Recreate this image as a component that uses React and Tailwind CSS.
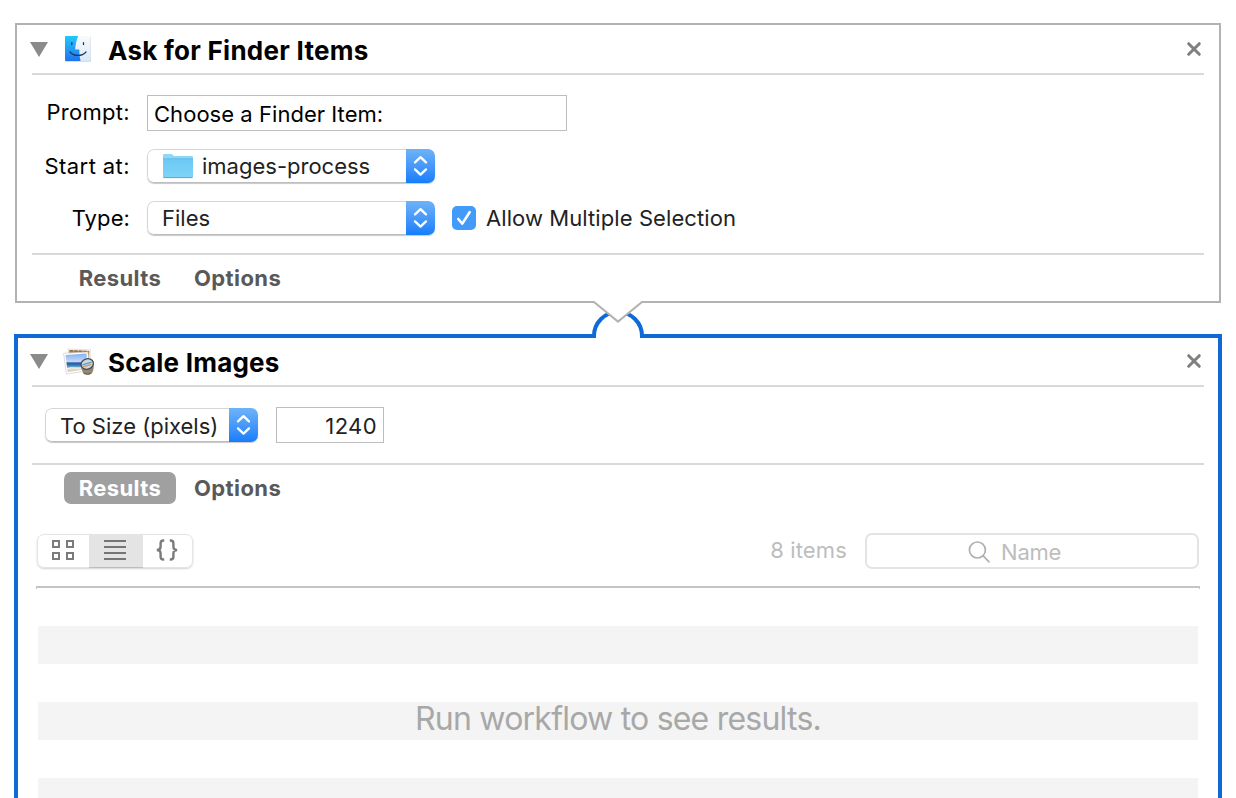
import React from "react";

function Chevrons() {
  return (
    <span className="flex h-full w-[29px] shrink-0 items-center justify-center bg-gradient-to-b from-[#6db3f8] to-[#157dfb]">
      <svg width="15" height="22" viewBox="0 0 15 22" fill="none" stroke="#fff" strokeWidth="2.3" strokeLinecap="round" strokeLinejoin="round">
        <path d="M2 7.4 7.5 2.2 13 7.4M2 14.4 7.5 19.6 13 14.4" />
      </svg>
    </span>
  );
}

function Select({ className, children }) {
  return (
    <div className={`relative flex h-[34px] overflow-hidden rounded-[7px] bg-white shadow-[0_1px_1px_rgba(0,0,0,0.22)] ${className}`}>
      <div className="flex flex-1 items-center rounded-l-[7px] border border-r-0 border-[#d6d6d6] border-b-[#bdbdbd] pl-[14px] text-[#222]">{children}</div>
      <Chevrons />
    </div>
  );
}

function FinderIcon() {
  return (
    <svg width="28" height="28" viewBox="0 0 28 28" className="block">
      <defs>
        <linearGradient id="fl" x1="0" y1="0" x2="0" y2="1">
          <stop offset="0" stopColor="#20c9fb" />
          <stop offset="1" stopColor="#2272f0" />
        </linearGradient>
        <linearGradient id="fr" x1="0" y1="0" x2="0" y2="1">
          <stop offset="0" stopColor="#fafafc" />
          <stop offset="1" stopColor="#d9e9f8" />
        </linearGradient>
      </defs>
      <rect x="1" y="1.4" width="26" height="25.4" rx="1" fill="#c9d3dd" />
      <rect x="1" y="1" width="25.6" height="25" rx="1" fill="url(#fr)" />
      <path d="M2 1H14.2C12.4 5 11.4 10 11.2 14.6H15.4C15.2 18.6 15.7 22.5 16.6 26H2A1 1 0 0 1 1 25V2A1 1 0 0 1 2 1Z" fill="url(#fl)" />
      <path d="M7.8 7.6V9.6M19.5 7.6V9.6" stroke="#16395f" strokeWidth="1.3" strokeLinecap="round" />
      <path d="M6 17C10 21.6 18 21.6 22 17" stroke="#16395f" strokeWidth="1.2" fill="none" strokeLinecap="round" />
    </svg>
  );
}

function PreviewIcon() {
  return (
    <svg width="32" height="28" viewBox="0 0 32 28" className="-ml-px block">
      <defs>
        <linearGradient id="sky" x1="0" y1="0" x2="0" y2="1">
          <stop offset="0" stopColor="#86b1f2" />
          <stop offset="0.46" stopColor="#c4dcf8" />
          <stop offset="0.5" stopColor="#2d529c" />
          <stop offset="0.64" stopColor="#3a78bc" />
          <stop offset="0.74" stopColor="#6fb4cf" />
          <stop offset="0.82" stopColor="#e9e1d0" />
          <stop offset="1" stopColor="#d1c4ab" />
        </linearGradient>
      </defs>
      <path d="M5 1 27.5 1.8 27 18 5 16Z" fill="#f3f0ea" stroke="#cfcfcf" strokeWidth=".5" />
      <path d="M6 2.2 26.2 3 26 16 7 15Z" fill="#b68a51" />
      <path d="M7 2.8 25.4 3.4" stroke="#7d5d34" strokeWidth="1" strokeDasharray="3 1.5" />
      <path d="M0.6 5.3 24.8 3.9 27 22.5 3.4 26Z" fill="#fff" stroke="#c5c5c5" strokeWidth=".6" />
      <path d="M2.4 6.9 23.4 5.6 25.2 21 4.7 23.9Z" fill="url(#sky)" />
      <path d="M4.6 20.6C9 18.6 14 21 19 19.6" stroke="#f5fafc" strokeWidth="1" fill="none" />
      <path d="M17.6 18.6C20 22 27 21 30.2 14.4 31.2 18 30.8 23 28.8 25.2 26.6 27.4 22 27.4 20.2 25.2Z" fill="#958775" />
      <path d="M20.2 24.6C22.6 26 26.6 25.6 28.8 24.2 28.4 27 21.4 27.6 20.2 24.6Z" fill="#625a52" />
      <ellipse cx="24.2" cy="16" rx="6.3" ry="5.2" fill="#c5dae6" stroke="#4d4a48" strokeWidth="1.3" transform="rotate(-18 24.2 16)" />
      <path d="M19.4 16.8 28.6 14.2" stroke="#6c97bd" strokeWidth="1.2" />
      <path d="M20 18.8 28.4 16.4" stroke="#c79a6c" strokeWidth="1.4" />
    </svg>
  );
}

function FolderIcon() {
  return (
    <svg width="32" height="26" viewBox="0 0 32 26" className="block">
      <defs>
        <linearGradient id="fold" x1="0" y1="0" x2="0" y2="1">
          <stop offset="0" stopColor="#6bc9f5" />
          <stop offset="1" stopColor="#7fd3f7" />
        </linearGradient>
      </defs>
      <path d="M1 2.2Q1 1 2.2 1H9.2Q10 1 10.6 1.7L12 3H29.8Q31 3 31 4.2V24H1Z" fill="#8fd6f7" />
      <path d="M1 5.8H31V23.8Q31 24.8 30 24.8H2Q1 24.8 1 23.8Z" fill="url(#fold)" />
      <path d="M1 5.8H31" stroke="#5db9e6" strokeWidth=".8" />
      <path d="M1.5 24.6H30.5" stroke="#5aa6cc" strokeWidth="1" />
    </svg>
  );
}

function Header({ icon, title, className, titleClass, closeClass }) {
  return (
    <div className={`flex items-center border-b-2 border-[#d9d9d9] ${className}`}>
      <svg width="18" height="15" viewBox="0 0 18 15" className="-ml-[2px] shrink-0">
        <path d="M0 0H18L9 15Z" fill="#8b8b8b" />
      </svg>
      <div className="ml-4 flex w-[32px] shrink-0">{icon}</div>
      <h2 className={`ml-3 flex-1 whitespace-nowrap text-[26px] leading-[32px] font-bold text-black ${titleClass}`}>{title}</h2>
      <svg width="16" height="16" viewBox="0 0 16 16" className={`mr-[2px] ${closeClass}`} stroke="#7f7f7f" strokeWidth="3" strokeLinecap="round">
        <path d="M2.7 2.7 13.3 13.3M13.3 2.7 2.7 13.3" />
      </svg>
    </div>
  );
}

function Tabs({ active, className }) {
  return (
    <div className={`flex items-center pl-8 text-[22px] font-bold tracking-[0.4px] text-[#595959] ${className}`}>
      <span className={`flex h-8 w-[112px] items-center justify-center rounded-[7px] ${active ? "bg-[#a0a0a0] text-white" : ""}`}>Results</span>
      <span className="ml-[18px]">Options</span>
    </div>
  );
}

export default function App() {
  return (
    <main className="relative flex h-[798px] w-[1236px] flex-col overflow-hidden bg-white pt-[23px] font-['Inter','Liberation_Sans',sans-serif] text-[22px] leading-[28px] text-black">
      <section className="mx-[15px] h-[280px] shrink-0 border-2 border-[#b2b2b2] px-[15px]">
        <Header className="h-[50px]" icon={<FinderIcon />} title="Ask for Finder Items" titleClass="mt-[3px] tracking-[0.27px]" closeClass="mt-0" />
        <div className="flex h-[180px] flex-col gap-[18px] border-b-2 border-[#d9d9d9] pt-5">
          <div className="flex h-9 items-center">
            <label className="-mt-[2px] w-[98px] text-right tracking-[0.3px]">Prompt:</label>
            <div className="ml-[17px] flex h-9 w-[420px] items-center border border-[#bdbdbd] pl-[6px] pt-[2px] tracking-[0.04px]">Choose a Finder Item:</div>
          </div>
          <div className="flex h-[34px] items-center">
            <label className="w-[98px] text-right tracking-[0.42px]">Start at:</label>
            <Select className="ml-[17px] w-[288px]">
              <FolderIcon />
              <span className="ml-2">images-process</span>
            </Select>
          </div>
          <div className="flex h-[34px] items-center">
            <label className="w-[98px] text-right tracking-[0.1px]">Type:</label>
            <Select className="ml-[17px] w-[288px]">Files</Select>
            <span className="ml-[17px] flex size-6 items-center justify-center rounded-[5px] bg-[#429bf9]">
              <svg width="24" height="24" viewBox="0 0 24 24" fill="none" stroke="#fff" strokeWidth="2.6" strokeLinecap="round" strokeLinejoin="round">
                <path d="M6.3 13 10.3 17.6 17.6 6.2" />
              </svg>
            </span>
            <span className="ml-[10px] tracking-[0.08px] text-[#222]">Allow Multiple Selection</span>
          </div>
        </div>
        <Tabs className="h-[46px]" />
      </section>

      <section className="mx-[14px] mt-[31px] h-[500px] shrink-0 border-4 border-[#0f6ad8] px-[14px]">
        <Header className="h-[49px]" icon={<PreviewIcon />} title="Scale Images" titleClass="mt-[2px] tracking-[0.22px]" closeClass="-mt-px" />
        <div className="flex h-[78px] items-center border-b-2 border-[#d9d9d9] pl-[13px]">
          <Select className="w-[213px]"><span className="mt-px">To Size (pixels)</span></Select>
          <div className="ml-[18px] flex h-9 w-[108px] items-center justify-end border border-[#bdbdbd] pr-[6px] pt-[2px] tracking-[0.4px] text-[#222]">1240</div>
        </div>
        <Tabs active className="h-[46px]" />

        <div className="flex h-[75px] items-center pl-[5px] pr-[5px] pt-1">
          <div className="flex h-[34px] w-[156px] rounded-[7px] border border-[#e4e4e4] shadow-[0_1px_2px_rgba(0,0,0,0.18)]">
            <span className="flex w-[51px] items-center justify-center pr-[2px]">
              <svg width="24" height="22" viewBox="0 0 24 22" fill="none" stroke="#7b7b7b" strokeWidth="2" className="-mt-[2px]">
                <path d="M2 2H8V8H2ZM16 2H22V8H16ZM2 14H8V20H2ZM16 14H22V20H16Z" />
              </svg>
            </span>
            <span className="-mb-px -mt-px flex w-[54px] items-center justify-center border-b border-[#bdbdbd] bg-[#e4e4e4] pr-[2px]">
              <svg width="22" height="20" viewBox="0 0 22 20" fill="#757575">
                <path d="M0 0H22V2H0ZM0 6H22V8H0ZM0 12H22V14H0ZM0 18H22V20H0Z" />
              </svg>
            </span>
            <span className="flex flex-1 items-center justify-center pr-[2px]">
              <svg width="24" height="22" viewBox="0 0 24 22" fill="none" stroke="#7b7b7b" strokeWidth="2.4" className="-mt-[2px]">
                <path d="M9.2 1.5H8.4Q5.6 1.5 5.6 4.3V7.5Q5.6 11 1.8 11Q5.6 11 5.6 14.5V17.7Q5.6 20.5 8.4 20.5H9.2M14.8 1.5H15.6Q18.4 1.5 18.4 4.3V7.5Q18.4 11 22.2 11Q18.4 11 18.4 14.5V17.7Q18.4 20.5 15.6 20.5H14.8" />
              </svg>
            </span>
          </div>
          <span className="-mt-[2px] ml-auto tracking-[0.15px] text-[#bdbdbd]">8 items</span>
          <div className="ml-[18px] flex h-9 w-[334px] items-center rounded-[7px] border-2 border-[#e4e4e4] pl-[101px] pt-[2px] text-[#bdbdbd]">
            <svg width="22" height="22" viewBox="0 0 22 22" fill="none" stroke="#b0b0b0" strokeWidth="1.7" strokeLinecap="round">
              <circle cx="9.4" cy="9" r="8" />
              <path d="M15.2 14.8 21 20.8" />
            </svg>
            <span className="ml-[11px] tracking-[-0.2px]">Name</span>
          </div>
        </div>

        <div className="mx-1 h-[3px] border-x border-t-2 border-[#c4c4c4]" />
        <div className="mx-[6px] flex flex-col">
          <div className="h-[37px]" />
          <div className="h-[38px] bg-[#f4f4f4]" />
          <div className="h-[38px]" />
          <div className="flex h-[38px] items-center justify-center bg-[#f4f4f4] text-[32px] leading-[38px] tracking-[-0.78px] text-[#a8a8a8]">
            <span className="-mt-1 whitespace-nowrap">Run workflow to see results.</span>
          </div>
          <div className="h-[38px]" />
          <div className="h-[38px] bg-[#f4f4f4]" />
        </div>
      </section>

      <svg className="absolute left-[588px] top-[298px]" width="60" height="44" viewBox="588 298 60 44" fill="none">
        <path d="M596 333H640V339H596Z" fill="#fff" />
        <path d="M594 338V336A24 24 0 0 1 642 336V338" fill="#fff" stroke="#0f6ad8" strokeWidth="4" />
        <path d="M594 300.8V302L618 322 642 302V300.8Z" fill="#fff" />
        <path d="M593.5 302H594L618 321.6 642 302H642.5" stroke="#b2b2b2" strokeWidth="2" />
      </svg>
    </main>
  );
}
